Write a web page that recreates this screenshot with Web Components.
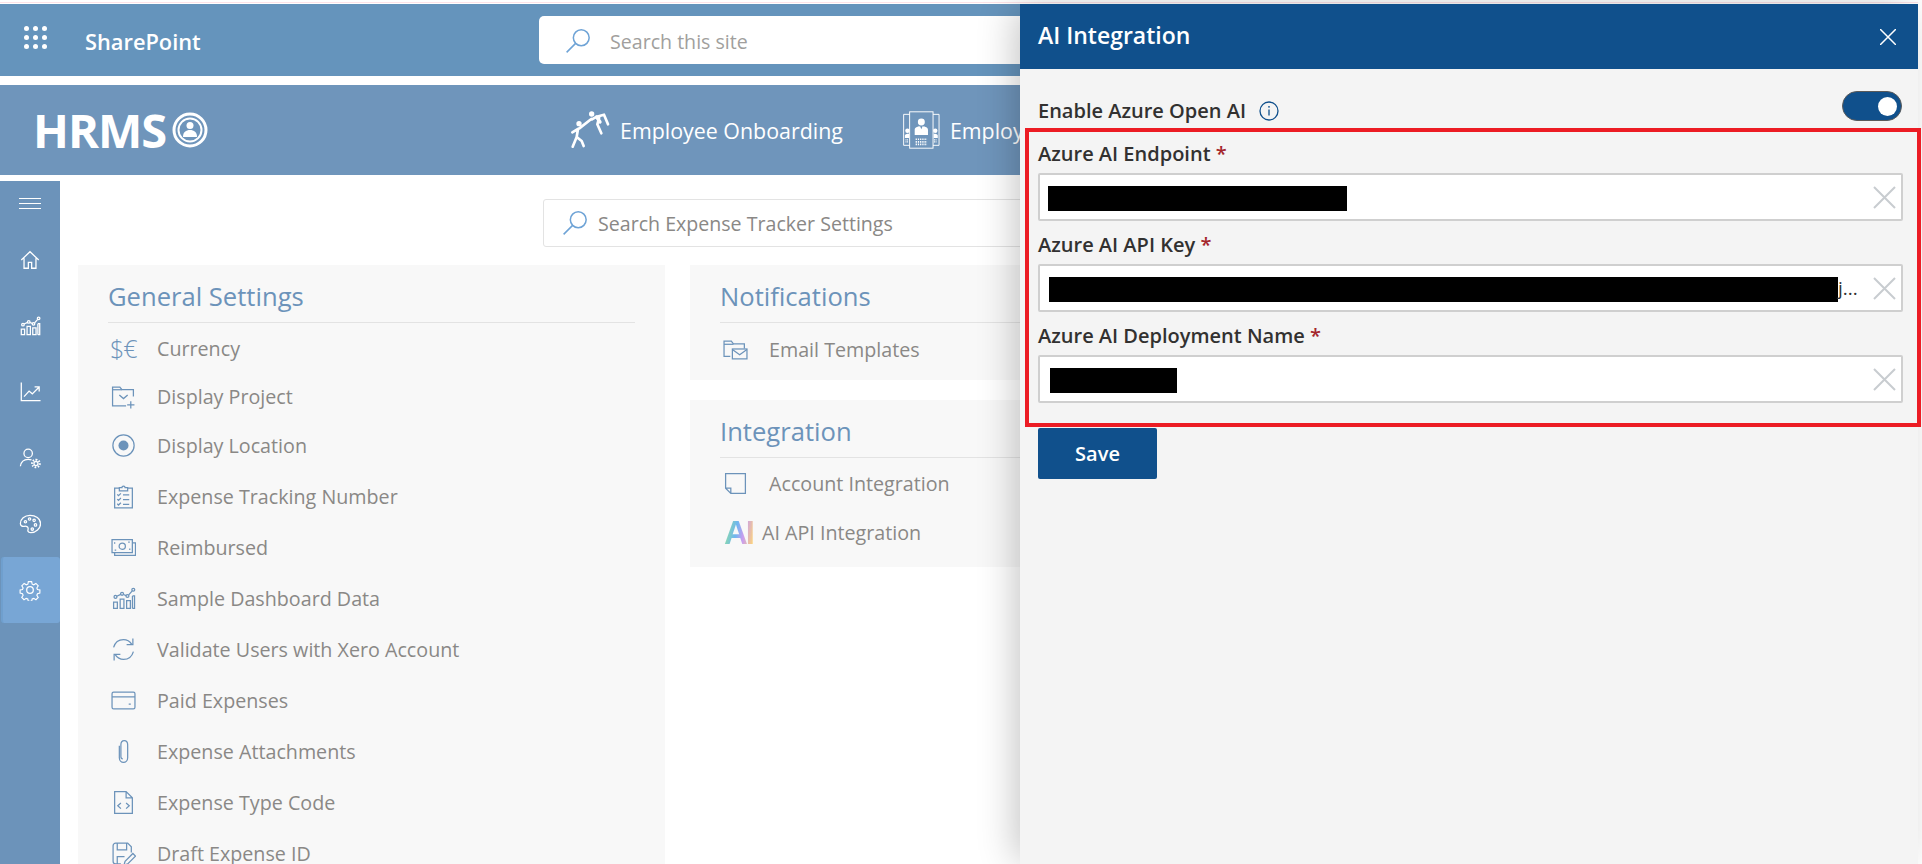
<!DOCTYPE html>
<html lang="en">
<head>
<meta charset="utf-8">
<title>AI Integration</title>
<style>
	html, body { margin: 0; height: 100%; background: #fff; overflow: hidden; }
	body { font-family: "Open Sans", "Noto Sans", sans-serif; }
</style>
</head>
<body>

<hrms-page>
	<suite-bar></suite-bar>
	<hrms-nav>
		<nav-link icon="onboarding">Employee Onboarding</nav-link>
		<nav-link icon="directory">Employee Directory</nav-link>
	</hrms-nav>
	<work-area slot="work">
		<side-rail></side-rail>
		<settings-view>
			<settings-card slot="left" heading="General Settings">
				<settings-row icon="currency" h="48">Currency</settings-row>
				<settings-row icon="folder" h="48">Display Project</settings-row>
				<settings-row icon="location">Display Location</settings-row>
				<settings-row icon="checklist">Expense Tracking Number</settings-row>
				<settings-row icon="money">Reimbursed</settings-row>
				<settings-row icon="bars">Sample Dashboard Data</settings-row>
				<settings-row icon="sync">Validate Users with Xero Account</settings-row>
				<settings-row icon="wallet">Paid Expenses</settings-row>
				<settings-row icon="clip">Expense Attachments</settings-row>
				<settings-row icon="code">Expense Type Code</settings-row>
				<settings-row icon="draft">Draft Expense ID</settings-row>
			</settings-card>
			<settings-card slot="right" heading="Notifications" pad="6">
				<settings-row icon="mailfolder">Email Templates</settings-row>
			</settings-card>
			<settings-card slot="right" heading="Integration" pad="10">
				<settings-row icon="note" h="48">Account Integration</settings-row>
				<settings-row icon="ai">AI API Integration</settings-row>
			</settings-card>
		</settings-view>
	</work-area>
	<ai-panel slot="overlay" heading="AI Integration"></ai-panel>
</hrms-page>

<script>
const ICONS = {
	// rail + row icons, all on a 24 box
	home: '<path d="M2.5 12 12 3l9.5 9M5.5 10v11h4.7v-6.5h3.6V21h4.7V10"/>',
	bars: '<path d="M2.5 21.5v-6h3.6v6zM8.8 21.5v-9h3.6v9zM15 21.5v-7.500h3.600v7.500zM20.600 21.500V9.500"/><path d="M20.600 21.500h2V9.500h-2"/><circle cx="4.300" cy="10.500" r="1.400"/><circle cx="10.600" cy="7.500" r="1.400"/><circle cx="15.800" cy="9.600" r="1.400"/><circle cx="21.400" cy="3.600" r="1.400"/><path d="m5.500 9.800 3.900-1.700M12 8.200l2.500 1M17 8.600l3.400-3.900"/>',
	line: '<path d="M2.500 1.500v20h21M5.500 17l5.500-6 3.500 3 7.500-7.500M17 6.500h5v5"/>',
	usergear: '<circle cx="10" cy="7" r="4.600"/><path d="M1.500 21c.7-5 4-7.600 8.500-7.600 1.500 0 2.600.3 3.600.7"/><circle cx="18.500" cy="18" r="2.200"/><path stroke-width="2.200" stroke-dasharray="1.600 1.550" d="M18.500 13.800a4.200 4.200 0 1 1-.01 0z"/>',
	palette: '<path d="M12 2.500C6 2.500 1.500 6.500 1.500 11.500c0 2.500 2 3.400 4.200 3 2.300-.4 4.300.4 4.300 2.500 0 1.300-.6 2-.2 3 .4 1 1.500 1.500 3 1.500 5.500 0 10.700-4.500 10.700-10S18 2.500 12 2.500z"/><circle cx="7" cy="9.500" r="1.300"/><circle cx="11.500" cy="6.500" r="1.300"/><circle cx="16.500" cy="8" r="1.300"/><circle cx="18" cy="13" r="1.300"/><circle cx="14.500" cy="17.500" r="1.300"/>',
	gear: '<circle cx="12" cy="12" r="3.600"/><path d="M10 1.800h4l.7 3.100 1.900.8 2.700-1.700 2.800 2.800-1.700 2.700.8 1.900 3 .7-.1 3.800-2.900.7-.8 1.900 1.700 2.700-2.800 2.800-2.700-1.700-1.900.8-.7 2.800h-4l-.7-2.800-1.900-.8-2.700 1.700-2.800-2.800 1.700-2.700-.8-1.900-2.900-.7v-3.800l2.900-.7.8-1.900L2 6.800l2.800-2.800 2.700 1.700 1.900-.8z" transform="translate(1.300 1.300) scale(.89)"/>',
	folder: '<path d="M21.500 12V5.500H10.500L8.500 3h-7v18h13"/><path d="M1.500 5.500h9"/><path d="m8 10.500 4 3.500 4-3.500M19 16.500v7M15.500 20h7"/>',
	location: '<circle cx="12" cy="12" r="10.200"/><circle cx="12" cy="12" r="4.800" fill="currentColor" stroke="none"/>',
	checklist: '<path d="M8 4H3.500v19h17V4H16"/><path d="M8 6.500V3.500h2.500a1.500 1.500 0 0 1 3 0H16v3z"/><path d="m6 10 1.200 1.200L9.500 9M6 14.500l1.200 1.200 2.300-2.200M6 19l1.200 1.200 2.300-2.200M11.500 10.500h6M11.500 15h6M11.500 19.500h6"/>',
	money: '<path d="M1 4.500h19.500v12.500H1z"/><path d="M3.500 17v2.500h20V7.500h-3"/><circle cx="10.800" cy="10.700" r="3"/><path d="M3.500 7v1.500M18 13v1.500M3.500 14.500H5M16.500 6.800H18"/>',
	sync: '<path d="M2.500 10C3.800 5.400 7.600 2.500 12 2.500c3.200 0 6 1.500 8 4.500M21.500 14c-1.300 4.600-5 7.500-9.500 7.500-3.200 0-6-1.500-8-4.500"/><path d="M21 1.500V7.300h-6M3 22.500v-5.800h6"/>',
	wallet: '<rect x="1" y="4" width="22" height="16" rx="1.500"/><path d="M1 8.500h22M17 15.500h2"/>',
	clip: '<path d="M8 6.500v11.500c0 2.500 1.800 4.500 4 4.500s4-2 4-4.500V5.500c0-2.200-1.300-4-3.300-4s-3.200 1.800-3.200 4V17c0 1.100.7 2 1.800 2"/>',
	code: '<path d="M14.500 1.500H3.500v21h17V7.500zM14.500 1.500v6h6"/><path d="m9.500 12.500-3 2.700 3 2.700M14.500 12.500l3 2.700-3 2.700"/>',
	draft: '<path d="M9.500 22H4.500A2.500 2.500 0 0 1 2 19.500V4.500A2.500 2.500 0 0 1 4.500 2h11.500l3.500 3.500V11"/><path d="M6 2v6.500h9V2M6 22v-7h7"/><path d="m12.500 23 1-3.500 7.500-7.500 2.500 2.500-7.500 7.500z"/>',
	mailfolder: '<path d="M7 18.500H1V4h7l2 2.500h10.500V11"/><path d="M1 7h9"/><rect x="9" y="11.500" width="14" height="9.500"/><path d="m9 12 7 5 7-5"/>',
	note: '<path d="M2.500 2.500h19v19h-14l-5-5zM2.500 16.500h5v5"/>',
	search: '<circle cx="15" cy="9" r="7.300"/><path d="M9.800 14.200 1.500 22.500"/>'
};

class UiIcon extends HTMLElement {
	connectedCallback() {
		const size = this.getAttribute('size') || 24;
		const weight = this.getAttribute('weight') || 1.3;
		this.attachShadow({ mode: 'open' }).innerHTML = `
			<style>
				:host { display: inline-flex; flex: none; line-height: 0; }
			</style>
			<svg width="${size}" height="${size}" viewBox="0 0 24 24" fill="none" stroke="currentColor"
				stroke-width="${weight}">${ICONS[this.getAttribute('name')] || ''}</svg>`;
	}
}
customElements.define('ui-icon', UiIcon);

class HrmsPage extends HTMLElement {
	constructor() {
		super();
		this.attachShadow({ mode: 'open' }).innerHTML = `
			<style>
				:host {
					display: flex;
					flex-direction: column;
					position: relative;
					height: 864px;
					box-sizing: border-box;
					padding-right: 4px;
					overflow: hidden;
				}
				.strip { height: 4px; flex: none; box-sizing: border-box; padding-top: 2px; }
				.strip i { display: block; height: 1px; background: #fde3e8; }
			</style>
			<div class="strip"><i></i></div>
			<slot></slot>
			<slot name="work"></slot>
			<slot name="overlay"></slot>`;
	}
}
customElements.define('hrms-page', HrmsPage);

class WorkArea extends HTMLElement {
	constructor() {
		super();
		this.attachShadow({ mode: 'open' }).innerHTML = `
			<style>
				:host { display: flex; flex: 1; min-height: 0; margin-top: 6px; }
			</style>
			<slot></slot>`;
	}
}
customElements.define('work-area', WorkArea);

class SearchBox extends HTMLElement {
	constructor() {
		super();
		this.attachShadow({ mode: 'open' }).innerHTML = `
			<style>
				:host {
					display: flex;
					align-items: center;
					box-sizing: border-box;
					height: 48px;
					background: #fff;
					color: #a19f9d;
					font-size: 19.600px;
				}
				ui-icon { color: #6ea3d6; }
			</style>
			<ui-icon name="search" size="26" weight="1.400"></ui-icon>
			<span><slot></slot></span>`;
	}
}
customElements.define('search-box', SearchBox);

class SuiteBar extends HTMLElement {
	constructor() {
		super();
		this.attachShadow({ mode: 'open' }).innerHTML = `
			<style>
				:host {
					display: flex;
					align-items: center;
					flex: none;
					height: 72px;
					background: #6594bc;
					color: #fff;
				}
				.waffle {
					display: grid;
					grid-template-columns: repeat(3, 5px);
					gap: 4px;
					margin: 0 0 5px 24px;
				}
				.waffle i { width: 5px; height: 5px; border-radius: 50%; background: #fff; }
				.brand { margin: 2px 0 0 38px; width: 454px; font-size: 21.800px; font-weight: 600; }
				search-box {
					width: 600px;
					border-radius: 5px;
					padding: 3px 0 0 26px;
					gap: 19px;
					margin-top: -1px;
				}
			</style>
			<div class="waffle"><i></i><i></i><i></i><i></i><i></i><i></i><i></i><i></i><i></i></div>
			<div class="brand">SharePoint</div>
			<search-box>Search this site</search-box>`;
	}
}
customElements.define('suite-bar', SuiteBar);

class HrmsNav extends HTMLElement {
	constructor() {
		super();
		this.attachShadow({ mode: 'open' }).innerHTML = `
			<style>
				:host {
					display: flex;
					align-items: center;
					flex: none;
					height: 90px;
					margin-top: 9px;
					background: #6f95bb;
					color: #fff;
				}
				.logo {
					display: flex;
					align-items: center;
					gap: 6px;
					margin-left: 33px;
					width: 537px;
					font-size: 47px;
					font-weight: 700;
					letter-spacing: -1px;
				}
				.links { display: flex; gap: 60px; }
			</style>
			<div class="logo">
				<span>HRMS</span>
				<svg width="36" height="36" viewBox="0 0 36 36" fill="none" stroke="#fff">
					<circle cx="18" cy="18" r="16" stroke-width="3"/>
					<circle cx="18" cy="18" r="11.500" stroke-width="2"/>
					<circle cx="18" cy="13.500" r="3.500" fill="#fff" stroke="none"/>
					<path d="M11 25c0-5 3-7 7-7s7 2 7 7z" fill="#fff" stroke="none"/>
				</svg>
			</div>
			<div class="links"><slot></slot></div>`;
	}
}
customElements.define('hrms-nav', HrmsNav);

class NavLink extends HTMLElement {
	constructor() {
		super();
		const onboarding = `
			<svg width="40" height="38" viewBox="20 22 120 114" fill="none" stroke="#fff" stroke-width="8" stroke-linecap="round" stroke-linejoin="round">
				<circle cx="47" cy="60" r="8" fill="#fff" stroke="none"/>
				<circle cx="85" cy="31" r="8" fill="#fff" stroke="none"/>
				<path d="M44 76 40 100M48 74 84 46M44 76 27 86M40 100 28 129M40 100 55 112 61 127"/>
				<path d="M86 47 100 39 122 33 134 62M108 40 102 62 114 89"/>
				<path d="M100 40 110 55" stroke-width="10"/>
			</svg>`;
		const directory = `
			<svg width="37" height="42" viewBox="24 13 117 119" fill="none" stroke="#fff" stroke-width="3">
				<rect x="45" y="15" width="74" height="115"/>
				<path d="M45 23H26v98h19M119 23h19v98h-19"/>
				<circle cx="82" cy="47" r="11" fill="#fff" stroke="none"/>
				<path d="M61 88V72c0-7 8-10 17-11l4 9 4-9c9 1 17 4 17 11v16z" fill="#fff" stroke="none"/>
				<path stroke-width="5" stroke-dasharray="4 3" d="M64 102h36M64 110h36M64 118h36"/>
				<circle cx="38" cy="75" r="7" fill="#fff" stroke="none"/>
				<circle cx="126" cy="75" r="7" fill="#fff" stroke="none"/>
				<path d="M30 98V90c0-4 5-6 13-6v14zM134 98V90c0-4-5-6-13-6v14z" fill="#fff" stroke="none"/>
				<path stroke-width="4" stroke-dasharray="3 2" d="M32 104h10M32 110h10M122 104h10M122 110h10"/>
			</svg>`;
		this.attachShadow({ mode: 'open' }).innerHTML = `
			<style>
				:host { display: flex; align-items: center; gap: 10px; font-size: 21.400px; white-space: nowrap; }
			</style>
			${this.getAttribute('icon') === 'onboarding' ? onboarding : directory}
			<span><slot></slot></span>`;
	}
}
customElements.define('nav-link', NavLink);

class SideRail extends HTMLElement {
	constructor() {
		super();
		const items = ['home', 'bars', 'line', 'usergear', 'palette', 'gear'];
		this.attachShadow({ mode: 'open' }).innerHTML = `
			<style>
				:host {
					display: flex;
					flex-direction: column;
					flex: none;
					width: 60px;
					background: #6c93ba;
					color: #fff;
				}
				.burger { height: 46px; display: flex; flex-direction: column; gap: 4px; align-items: center; padding-top: 17px; box-sizing: border-box; }
				.burger i { width: 22px; height: 1px; background: #fff; }
				.item {
					display: flex;
					align-items: center;
					justify-content: center;
					height: 66px;
					box-sizing: border-box;
				}
				.item.on {
					background: #78a6d5;
					border-left: 2px solid #6f9fce;
					border-radius: 3px;
					margin-left: 1px;
					padding-right: 3px;
				}
			</style>
			<div class="burger"><i></i><i></i><i></i></div>
			${items.map(n => `<div class="item ${n === 'gear' ? 'on' : ''}"><ui-icon name="${n}" size="22" weight="1.400"></ui-icon></div>`).join('')}`;
	}
}
customElements.define('side-rail', SideRail);

class SettingsView extends HTMLElement {
	constructor() {
		super();
		this.attachShadow({ mode: 'open' }).innerHTML = `
			<style>
				:host { display: block; flex: 1; min-width: 0; padding: 18px 0 0 18px; box-sizing: border-box; }
				search-box {
					width: 800px;
					margin-left: 465px;
					border: 1px solid #e3e3e3;
					border-radius: 3px;
					padding-left: 18px;
					gap: 10px;
					color: #8a8886;
				}
				.cols {
					display: grid;
					grid-template-columns: 587px 1fr;
					gap: 25px;
					margin-top: 18px;
				}
				.stack { display: flex; flex-direction: column; gap: 20px; }
			</style>
			<search-box>Search Expense Tracker Settings</search-box>
			<div class="cols">
				<div class="stack"><slot name="left"></slot></div>
				<div class="stack"><slot name="right"></slot></div>
			</div>`;
	}
}
customElements.define('settings-view', SettingsView);

class SettingsCard extends HTMLElement {
	constructor() {
		super();
		this.attachShadow({ mode: 'open' }).innerHTML = `
			<style>
				:host {
					display: block;
					background: #f8f8f8;
					padding: 0 30px ${this.getAttribute('pad') || 6}px;
				}
				h2 {
					margin: 0;
					height: 58px;
					box-sizing: border-box;
					padding-top: 12px;
					border-bottom: 1px solid #e3e3e3;
					color: #6c93ba;
					font-size: 25.600px;
					line-height: 40px;
					font-weight: 400;
				}
			</style>
			<h2>${this.getAttribute('heading')}</h2>
			<slot></slot>`;
	}
}
customElements.define('settings-card', SettingsCard);

class SettingsRow extends HTMLElement {
	constructor() {
		super();
		const name = this.getAttribute('icon');
		let glyph = `<ui-icon name="${name}" size="25" weight="1.200"></ui-icon>`;
		if (name === 'currency') glyph = '<span class="cur">$€</span>';
		if (name === 'ai') glyph = '<span class="ai">AI</span>';
		this.attachShadow({ mode: 'open' }).innerHTML = `
			<style>
				:host {
					display: flex;
					align-items: center;
					box-sizing: border-box;
					padding-top: 2px;
					height: ${this.getAttribute('h') || 51}px;
					color: #8a8886;
					font-size: 19.700px;
				}
				.icon { width: 49px; display: flex; align-items: center; color: #6c93ba; padding-left: 3px; box-sizing: border-box; }
				.cur { font-size: 25px; margin-left: -1px; font-weight: 300; letter-spacing: -1px; }
				.ai {
					font: 700 33px/34px "Liberation Sans", sans-serif;
					letter-spacing: -2px;
					background: linear-gradient(100deg, #8fe0a0 8%, #6fb6f0 42%, #c99df0 65%, #fbd27e 95%);
					-webkit-background-clip: text;
					background-clip: text;
					color: transparent;
				}
				:host([icon="ai"]) .icon { width: 42px; padding-left: 4px; }
			</style>
			<div class="icon">${glyph}</div>
			<span><slot></slot></span>`;
	}
}
customElements.define('settings-row', SettingsRow);

class AiField extends HTMLElement {
	constructor() {
		super();
		const ink = this.getAttribute('ink');
		this.attachShadow({ mode: 'open' }).innerHTML = `
			<style>
				:host { display: block; color: #323130; }
				label {
					display: block;
					height: 38px;
					line-height: 38px;
					font-size: 20px;
					font-weight: 600;
				}
				label b { color: #a4262c; font-weight: 600; }
				.box {
					display: flex;
					align-items: center;
					height: 48px;
					box-sizing: border-box;
					margin-right: 15px;
					padding-left: 10px;
					border: 2px solid #cfcfcf;
					border-radius: 2px;
					background: #fff;
				}
				.ink { height: 25px; background: #000; flex: none; width: ${ink}px; margin: 3px 0 0 ${this.getAttribute('inset') || 0}px; }
				.tail { flex: 1; font-size: 19px; white-space: nowrap; }
				svg { margin: 0 5px 0 0; flex: none; }
			</style>
			<label>${this.getAttribute('label')} <b>*</b></label>
			<div class="box">
				<div class="ink"></div>
				<div class="tail"><slot></slot></div>
				<svg width="23" height="23" viewBox="0 0 23 23" stroke="#c8ccd0" stroke-width="2"><path d="m1 1 21 21M22 1 1 22"/></svg>
			</div>`;
	}
}
customElements.define('ai-field', AiField);

class AiPanel extends HTMLElement {
	constructor() {
		super();
		this.attachShadow({ mode: 'open' }).innerHTML = `
			<style>
				:host {
					position: absolute;
					top: 4px;
					right: 4px;
					bottom: 0;
					width: 898px;
					background: #f4f4f4;
					box-shadow: -8px 0 36px -4px rgba(0, 0, 0, .24);
					color: #323130;
				}
				header {
					display: flex;
					align-items: center;
					justify-content: space-between;
					height: 65px;
					padding: 0 22px 0 18px;
					background: #10508c;
					color: #fff;
				}
				h1 { margin: 0 0 4px; font-size: 23px; font-weight: 600; }
				.body { padding: 21px 0 0 18px; }
				.enable {
					display: flex;
					align-items: center;
					height: 41px;
					margin-bottom: 4px;
					font-size: 20px;
					font-weight: 600;
				}
				.info {
					display: inline-flex;
					margin-left: 13px;
				}
				.toggle {
					margin-left: auto;
					margin-right: 16px;
					margin-top: -9px;
					width: 60px;
					height: 30px;
					box-sizing: border-box;
					border: 1px solid #5a5a5a;
					border-radius: 15px;
					background: #10508c;
					display: flex;
					align-items: center;
					justify-content: flex-end;
					padding-right: 4px;
				}
				.toggle i { width: 19px; height: 19px; border-radius: 50%; background: #fff; }
				ai-field + ai-field { margin-top: 5px; }
				.hl {
					position: absolute;
					left: 5px;
					right: -3px;
					top: 124px;
					height: 299px;
					box-sizing: border-box;
					border: 4px solid #ec1c24;
					pointer-events: none;
				}
				button {
					display: block;
					width: 119px;
					height: 51px;
					margin-top: 25px;
					border: 0;
					border-radius: 2px;
					background: #10508c;
					color: #fff;
					font: 600 20px "Open Sans", "Noto Sans", sans-serif;
				}
			</style>
			<header>
				<h1>${this.getAttribute('heading')}</h1>
				<svg width="16" height="16" viewBox="0 0 16 16" stroke="#fff" stroke-width="1.500"><path d="m0 0 16 16M16 0 0 16"/></svg>
			</header>
			<div class="body">
				<div class="enable">
					<span>Enable Azure Open AI</span>
					<span class="info">
						<svg width="20" height="20" viewBox="0 0 20 20" fill="none" stroke="#10508c" stroke-width="1.300">
							<circle cx="10" cy="10" r="9"/>
							<path d="M10 8.500v6"/>
							<circle cx="10" cy="5.800" r=".9" fill="#10508c" stroke="none"/>
						</svg>
					</span>
					<span class="toggle"><i></i></span>
				</div>
				<ai-field label="Azure AI Endpoint" ink="299" inset="-2"></ai-field>
				<ai-field label="Azure AI API Key" ink="789" inset="-1">j...</ai-field>
				<ai-field label="Azure AI Deployment Name" ink="127"></ai-field>
				<button>Save</button>
			</div>
			<div class="hl"></div>`;
	}
}
customElements.define('ai-panel', AiPanel);
</script>
</body>
</html>
